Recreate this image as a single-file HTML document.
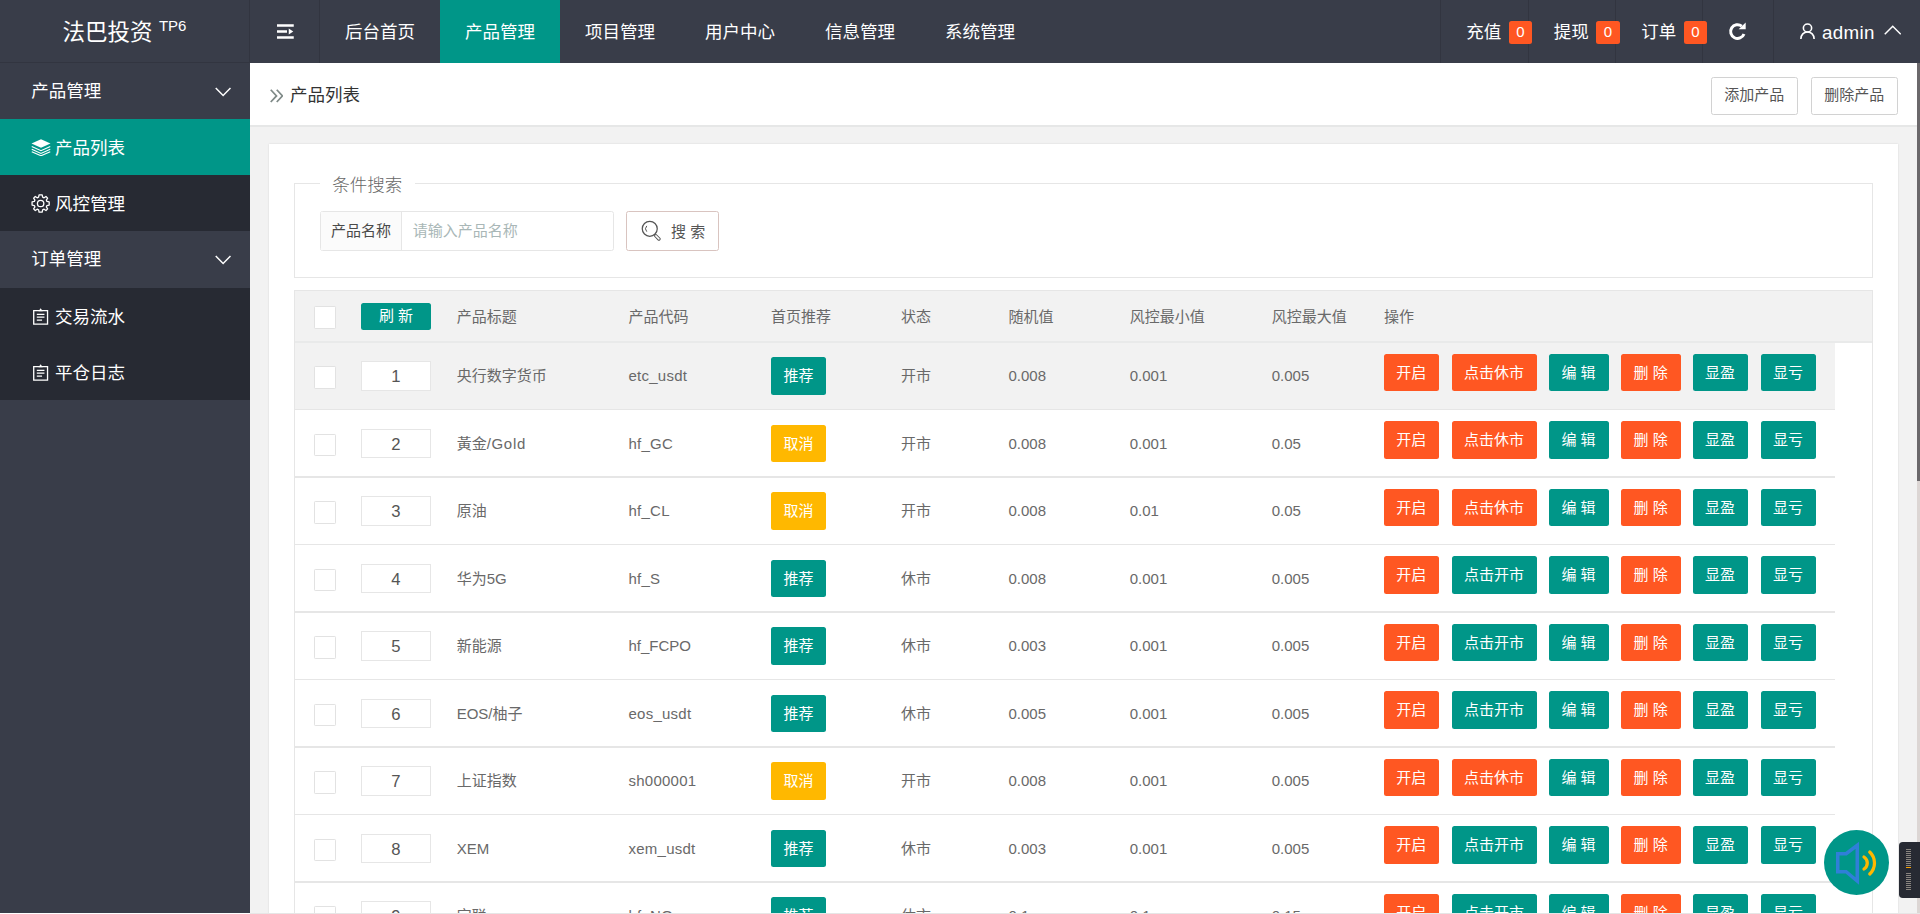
<!DOCTYPE html>
<html lang="zh-CN">
<head>
<meta charset="utf-8">
<title>产品列表</title>
<style>
*{box-sizing:border-box;margin:0;padding:0}
html,body{width:1920px;height:914px;overflow:hidden;background:#fff}
body:after{content:"";position:absolute;left:250px;top:913px;width:1670px;height:1px;background:#e6e6e6}
body{font-family:"Liberation Sans","Noto Sans CJK SC",sans-serif;font-size:14px;color:#333;line-height:24px}
#app{position:absolute;left:0;top:0;width:1536px;height:730.4px;zoom:1.25;overflow:hidden;background:#f2f2f2}
ul{list-style:none}
svg{display:block}
/* header */
.hd{position:absolute;left:0;top:0;width:1536px;height:50px;background:#393D49;color:#fff}
.logo{position:absolute;left:0;top:0;width:200px;height:50px;line-height:52px;text-align:center;font-size:18px;color:#fff;border-right:1px solid rgba(0,0,0,.12);border-bottom:1px solid rgba(0,0,0,.12)}
.logo sup{font-size:12px;position:relative;top:-7px;vertical-align:baseline;margin-left:5px}
.fold{position:absolute;left:200px;top:0;width:56px;height:50px;border-right:1px solid rgba(0,0,0,.12)}
.fold svg{position:absolute;left:21.6px;top:18px}
.nav{position:absolute;left:256px;top:0;height:50px}
.nav li{float:left;width:96px;height:50px;line-height:52px;text-align:center;color:#fff;font-size:14px}
.nav li.on{background:#009688}
.navr{position:absolute;left:0;top:0;width:1536px;height:50px}
.navr .it{position:absolute;top:0;height:50px;line-height:52px;font-size:14px;color:#fff;white-space:nowrap}
.navr .sep{position:absolute;top:0;width:1px;height:50px;background:rgba(0,0,0,.12)}
.badge{position:absolute;top:17px;height:18px;line-height:18px;padding:0 6px;font-size:12px;background:#FF5722;color:#fff;border-radius:2px;text-align:center}
/* side */
.side{position:absolute;left:0;top:50px;width:200px;bottom:0;background:#393D49;color:#fff}
.side .grp{position:relative;height:45px;line-height:45px;padding-left:25px;font-size:14px;color:#fff}
.side .grp svg{position:absolute;right:15px;top:19.2px}
.side .sub{background:rgba(0,0,0,.3)}
.side .sub li{position:relative;height:45px;line-height:47px;padding-left:44px;font-size:14px;color:#fff}
.side .sub li.on{background:#009688}
.side .sub li svg{position:absolute;left:24.4px;top:15.8px}
/* body */
.bd{position:absolute;left:200px;top:50px;width:1333.6px;bottom:0;background:#f2f2f2;overflow:hidden}
.crumb{position:relative;height:50px;background:#fff;box-shadow:0 1.6px 0 0 #e6e7e7;line-height:50px;font-size:14px;color:#333}
.crumb .tt{position:absolute;left:32px;top:1px}
.crumb svg{position:absolute;left:15.6px;top:21px}
.btnp{position:absolute;top:11.6px;height:30px;line-height:27px;border:1px solid #d2d2d2;border-radius:2px;background:#fff;color:#555;font-size:12px;text-align:center}
.panel{position:absolute;left:15px;top:65px;width:1303.6px;height:700px;background:#fff;padding:20px;box-shadow:0 0 1.5px 0 rgba(0,0,0,.12)}
fieldset{position:relative;border:1px solid #e6e6e6;height:85.6px;margin-top:1.6px}
fieldset legend{margin-left:20px;padding:0 10px;font-size:14px;font-weight:300;color:#666;line-height:20px;position:relative;top:1.6px}
.ig{position:absolute;left:41px;top:53.8px;height:32px;width:235px;border:1px solid #e6e6e6;border-radius:2px;background:#fff}
.ig .lb{position:absolute;left:0;top:0;width:65px;height:30px;line-height:30px;text-align:center;font-size:12px;color:#4a4a4a;background:#fbfbfb;border-right:1px solid #e6e6e6}
.ig .ph{position:absolute;left:73.4px;top:0;line-height:30px;font-size:12px;color:#a9b7b7}
.sbtn{position:absolute;left:286px;top:53.8px;width:74px;height:32px;border:1px solid #d9c4c0;border-radius:2px;background:#fff;font-size:12px;color:#555;line-height:30px}
.sbtn svg{position:absolute;left:11px;top:6.2px}
.sbtn span{position:absolute;left:35px;top:.8px}
/* table */
.tb{position:absolute;left:20px;top:117px;width:1263.6px;height:600px;border:1px solid #e6e6e6;border-bottom:0}
.th{position:absolute;left:0;top:0;width:100%;height:41.8px;background:#f2f2f2;border-bottom:1.6px solid #e9eaea}
.th span,.tr span.c{position:absolute;font-size:12px;color:#696969;white-space:nowrap}
.tr span.ls{letter-spacing:.2px}
.th span{top:0;line-height:41px}
.tr{position:absolute;left:0;width:1232px;height:54px;border-bottom:1px solid #e6e6e6}
.tr.hv{background:#f2f2f2;top:41.6px!important;height:53.4px}
.tr.hv>*{margin-top:-.6px}
.tr.b2{height:54.8px;border-bottom-width:1.6px}
.tr span.c{top:0;line-height:54px}
.ck{position:absolute;left:15px;width:18px;height:18px;border:1px solid #e2e2e2;border-radius:1px;background:#fff}
.num{position:absolute;left:53px;top:15px;width:56px;height:23.6px;border:1px solid #e6e6e6;background:#fff;text-align:center;font-size:13.33px;line-height:23.5px;color:#555}
.b{position:absolute;height:30px;line-height:30px;border-radius:2px;color:#fff;font-size:12px;text-align:center;white-space:nowrap}
.g{background:#009688}.o{background:#FF5722}.y{background:#FFB800}
.rf{position:absolute;left:53px;top:9.2px;width:56px;height:22px;line-height:21px;border-radius:2px;background:#009688;color:#fff;font-size:12px;text-align:center}
.sbar{position:absolute;left:1533.6px;top:50px;width:2.4px;bottom:0;background:#dcd6d4}
.sthumb{position:absolute;left:1533.6px;top:50px;width:2.4px;height:335px;background:#6b686b}
.spk{position:absolute;left:1459.2px;top:664px;width:52px;height:52px}
.wdg{position:absolute;left:1519.2px;top:673.6px;width:16.8px;height:44.8px;background:#272a33;border-radius:3px 0 0 3px}
</style>
</head>
<body>
<div id="app">
<div class="hd">
<div class="logo">法巴投资<sup>TP6</sup></div>
<div class="fold"><svg width="14" height="14" viewBox="0 0 14 14"><rect x="0" y="1" width="13.4" height="2" fill="#fff"/><rect x="0" y="5.8" width="8" height="2" fill="#fff"/><rect x="0" y="10.6" width="13.4" height="2" fill="#fff"/><path d="M9.4 4.4 L13 6.8 L9.4 9.2 Z" fill="#fff"/></svg></div>
<ul class="nav"><li>后台首页</li><li class="on">产品管理</li><li>项目管理</li><li>用户中心</li><li>信息管理</li><li>系统管理</li></ul>
<div class="navr">
<i class="sep" style="left:1152px"></i><i class="sep" style="left:1222px"></i><i class="sep" style="left:1292px"></i><i class="sep" style="left:1361.6px"></i><i class="sep" style="left:1418px"></i>
<span class="it" style="left:1173px">充值</span><span class="badge" style="left:1207px">0</span>
<span class="it" style="left:1243px">提现</span><span class="badge" style="left:1277px">0</span>
<span class="it" style="left:1313px">订单</span><span class="badge" style="left:1347px">0</span>
<svg style="position:absolute;left:1382.6px;top:17.4px" width="15.6" height="15.6" viewBox="0 0 15 15"><path d="M12.3 9.2 A5.3 5.3 0 1 1 10.6 3.2" fill="none" stroke="#fff" stroke-width="2.3"/><path d="M8.2 5.6 L13.6 5.6 L13.6 0.4 Z" fill="#fff"/></svg>
<svg style="position:absolute;left:1440px;top:18px" width="12" height="13.4" preserveAspectRatio="none" viewBox="0 0 12 14"><circle cx="6" cy="4.2" r="3.3" fill="none" stroke="#fff" stroke-width="1.3"/><path d="M0.7 13.6 C0.7 9.6 3 7.6 6 7.6 C9 7.6 11.3 9.6 11.3 13.6" fill="none" stroke="#fff" stroke-width="1.3"/></svg>
<span class="it" style="left:1457.6px;font-size:15px;letter-spacing:.25px">admin</span>
<svg style="position:absolute;left:1507px;top:20px" width="14" height="8" viewBox="0 0 14 8"><path d="M0.6 7.4 L7 1 L13.4 7.4" fill="none" stroke="#fff" stroke-width="1.2"/></svg>
</div>
</div>
<div class="side">
<div class="grp">产品管理<svg width="13" height="8" viewBox="0 0 13 8"><path d="M0.6 0.8 L6.5 6.8 L12.4 0.8" fill="none" stroke="#fff" stroke-width="1.2"/></svg></div>
<ul class="sub"><li class="on"><svg width="16" height="13.8" preserveAspectRatio="none" viewBox="0 0 16 15"><path d="M8 0.3 L15.6 4 L8 7.7 L0.4 4 Z" fill="#fff"/><path d="M0.6 6.6 L8 10.2 L15.4 6.6 M0.6 8.9 L8 12.5 L15.4 8.9 M0.6 11.1 L8 14.6 L15.4 11.1" fill="none" stroke="#fff" stroke-width="0.9"/></svg>产品列表</li><li><svg style="left:24.4px;top:15px" width="15.4" height="15.2" viewBox="0 0 16 16"><circle cx="8" cy="8" r="2.7" fill="none" stroke="#fff" stroke-width="1.1"/><path d="M6.7 0.8 L9.3 0.8 L9.7 2.7 L10.9 3.2 L12.5 2.1 L13.9 3.5 L12.8 5.1 L13.3 6.3 L15.2 6.7 L15.2 9.3 L13.3 9.7 L12.8 10.9 L13.9 12.5 L12.5 13.9 L10.9 12.8 L9.7 13.3 L9.3 15.2 L6.7 15.2 L6.3 13.3 L5.1 12.8 L3.5 13.9 L2.1 12.5 L3.2 10.9 L2.7 9.7 L0.8 9.3 L0.8 6.7 L2.7 6.3 L3.2 5.1 L2.1 3.5 L3.5 2.1 L5.1 3.2 L6.3 2.7 Z" fill="none" stroke="#fff" stroke-width="1.1" stroke-linejoin="round"/></svg>风控管理</li></ul>
<div class="grp">订单管理<svg width="13" height="8" viewBox="0 0 13 8"><path d="M0.6 0.8 L6.5 6.8 L12.4 0.8" fill="none" stroke="#fff" stroke-width="1.2"/></svg></div>
<ul class="sub"><li><svg style="left:26.4px;top:16px" width="12.4" height="13.6" viewBox="0 0 13 14" preserveAspectRatio="none"><path d="M0.6 2.2 L0.6 13.3 L12.2 13.3 L12.2 2.2 Z" fill="none" stroke="#fff" stroke-width="1.1"/><path d="M4.6 2.6 L6.4 0.2 L8.2 2.6 Z" fill="#fff"/><path d="M3.2 5.2 H9.6 M3.2 7.6 H9.6 M3.2 10 H7.6" stroke="#fff" stroke-width="1" fill="none"/></svg>交易流水</li><li><svg style="left:26.4px;top:16px" width="12.4" height="13.6" viewBox="0 0 13 14" preserveAspectRatio="none"><path d="M0.6 2.2 L0.6 13.3 L12.2 13.3 L12.2 2.2 Z" fill="none" stroke="#fff" stroke-width="1.1"/><path d="M4.6 2.6 L6.4 0.2 L8.2 2.6 Z" fill="#fff"/><path d="M3.2 5.2 H9.6 M3.2 7.6 H9.6 M3.2 10 H7.6" stroke="#fff" stroke-width="1" fill="none"/></svg>平仓日志</li></ul>
</div>
<div class="bd">
<div class="crumb"><svg width="11" height="11" viewBox="0 0 11 11"><path d="M0.6 0.6 L5.2 5.5 L0.6 10.4 M5.4 0.6 L10 5.5 L5.4 10.4" fill="none" stroke="#7f8a88" stroke-width="1.4"/></svg><span class="tt">产品列表</span>
<a class="btnp" style="left:1169px;width:69px">添加产品</a><a class="btnp" style="left:1249px;width:69px">删除产品</a></div>
<div class="panel">
<fieldset><legend>条件搜索</legend></fieldset>
<div class="ig"><span class="lb">产品名称</span><span class="ph">请输入产品名称</span></div>
<a class="sbtn"><svg width="17" height="17" viewBox="0 0 17 17"><circle cx="7" cy="7" r="6" fill="none" stroke="#555" stroke-width="1"/><path d="M4.6 9.3 A3.4 3.4 0 0 1 4.6 4.7" fill="none" stroke="#555" stroke-width="0.8"/><rect x="11.2" y="11" width="5.4" height="2" rx="1" transform="rotate(45 11.2 12)" fill="#fff" stroke="#555" stroke-width="0.8"/></svg><span>搜 索</span></a>
<div class="tb">
<div class="th"><i class="ck" style="top:12px"></i><a class="rf">刷 新</a><span style="left:129.5px">产品标题</span><span style="left:267px">产品代码</span><span style="left:381px">首页推荐</span><span style="left:485px">状态</span><span style="left:571px">随机值</span><span style="left:668px">风控最小值</span><span style="left:781.6px">风控最大值</span><span style="left:871.3px">操作</span></div>
<div class="tr hv" style="top:41px"><i class="ck" style="top:19px"></i><span class="num">1</span><span class="c" style="left:129.5px">央行数字货币</span><span class="c ls" style="left:267px">etc_usdt</span><a class="b g" style="left:381px;top:12px;width:44px">推荐</a><span class="c" style="left:485px">开市</span><span class="c" style="left:571px">0.008</span><span class="c" style="left:668px">0.001</span><span class="c" style="left:781.6px">0.005</span><a class="b o" style="left:871.3px;top:9px;width:44px">开启</a><a class="b o" style="left:925.4px;top:9px;width:68px">点击休市</a><a class="b g" style="left:1003px;top:9px;width:48px">编 辑</a><a class="b o" style="left:1060.7px;top:9px;width:48px">删 除</a><a class="b g" style="left:1118.3px;top:9px;width:44px">显盈</a><a class="b g" style="left:1172.7px;top:9px;width:44px">显亏</a></div>
<div class="tr b2" style="top:95px"><i class="ck" style="top:19px"></i><span class="num">2</span><span class="c" style="left:129.5px">黃金<b style="font-weight:400;letter-spacing:.55px">/Gold</b></span><span class="c ls" style="left:267px">hf_GC</span><a class="b y" style="left:381px;top:12px;width:44px">取消</a><span class="c" style="left:485px">开市</span><span class="c" style="left:571px">0.008</span><span class="c" style="left:668px">0.001</span><span class="c" style="left:781.6px">0.05</span><a class="b o" style="left:871.3px;top:9px;width:44px">开启</a><a class="b o" style="left:925.4px;top:9px;width:68px">点击休市</a><a class="b g" style="left:1003px;top:9px;width:48px">编 辑</a><a class="b o" style="left:1060.7px;top:9px;width:48px">删 除</a><a class="b g" style="left:1118.3px;top:9px;width:44px">显盈</a><a class="b g" style="left:1172.7px;top:9px;width:44px">显亏</a></div>
<div class="tr" style="top:149px"><i class="ck" style="top:19px"></i><span class="num">3</span><span class="c" style="left:129.5px">原油</span><span class="c ls" style="left:267px">hf_CL</span><a class="b y" style="left:381px;top:12px;width:44px">取消</a><span class="c" style="left:485px">开市</span><span class="c" style="left:571px">0.008</span><span class="c" style="left:668px">0.01</span><span class="c" style="left:781.6px">0.05</span><a class="b o" style="left:871.3px;top:9px;width:44px">开启</a><a class="b o" style="left:925.4px;top:9px;width:68px">点击休市</a><a class="b g" style="left:1003px;top:9px;width:48px">编 辑</a><a class="b o" style="left:1060.7px;top:9px;width:48px">删 除</a><a class="b g" style="left:1118.3px;top:9px;width:44px">显盈</a><a class="b g" style="left:1172.7px;top:9px;width:44px">显亏</a></div>
<div class="tr b2" style="top:203px"><i class="ck" style="top:19px"></i><span class="num">4</span><span class="c" style="left:129.5px">华为5G</span><span class="c ls" style="left:267px">hf_S</span><a class="b g" style="left:381px;top:12px;width:44px">推荐</a><span class="c" style="left:485px">休市</span><span class="c" style="left:571px">0.008</span><span class="c" style="left:668px">0.001</span><span class="c" style="left:781.6px">0.005</span><a class="b o" style="left:871.3px;top:9px;width:44px">开启</a><a class="b g" style="left:925.4px;top:9px;width:68px">点击开市</a><a class="b g" style="left:1003px;top:9px;width:48px">编 辑</a><a class="b o" style="left:1060.7px;top:9px;width:48px">删 除</a><a class="b g" style="left:1118.3px;top:9px;width:44px">显盈</a><a class="b g" style="left:1172.7px;top:9px;width:44px">显亏</a></div>
<div class="tr" style="top:257px"><i class="ck" style="top:19px"></i><span class="num">5</span><span class="c" style="left:129.5px">新能源</span><span class="c" style="left:267px">hf_FCPO</span><a class="b g" style="left:381px;top:12px;width:44px">推荐</a><span class="c" style="left:485px">休市</span><span class="c" style="left:571px">0.003</span><span class="c" style="left:668px">0.001</span><span class="c" style="left:781.6px">0.005</span><a class="b o" style="left:871.3px;top:9px;width:44px">开启</a><a class="b g" style="left:925.4px;top:9px;width:68px">点击开市</a><a class="b g" style="left:1003px;top:9px;width:48px">编 辑</a><a class="b o" style="left:1060.7px;top:9px;width:48px">删 除</a><a class="b g" style="left:1118.3px;top:9px;width:44px">显盈</a><a class="b g" style="left:1172.7px;top:9px;width:44px">显亏</a></div>
<div class="tr b2" style="top:311px"><i class="ck" style="top:19px"></i><span class="num">6</span><span class="c" style="left:129.5px">EOS/柚子</span><span class="c ls" style="left:267px">eos_usdt</span><a class="b g" style="left:381px;top:12px;width:44px">推荐</a><span class="c" style="left:485px">休市</span><span class="c" style="left:571px">0.005</span><span class="c" style="left:668px">0.001</span><span class="c" style="left:781.6px">0.005</span><a class="b o" style="left:871.3px;top:9px;width:44px">开启</a><a class="b g" style="left:925.4px;top:9px;width:68px">点击开市</a><a class="b g" style="left:1003px;top:9px;width:48px">编 辑</a><a class="b o" style="left:1060.7px;top:9px;width:48px">删 除</a><a class="b g" style="left:1118.3px;top:9px;width:44px">显盈</a><a class="b g" style="left:1172.7px;top:9px;width:44px">显亏</a></div>
<div class="tr" style="top:365px"><i class="ck" style="top:19px"></i><span class="num">7</span><span class="c" style="left:129.5px">上证指数</span><span class="c ls" style="left:267px">sh000001</span><a class="b y" style="left:381px;top:12px;width:44px">取消</a><span class="c" style="left:485px">开市</span><span class="c" style="left:571px">0.008</span><span class="c" style="left:668px">0.001</span><span class="c" style="left:781.6px">0.005</span><a class="b o" style="left:871.3px;top:9px;width:44px">开启</a><a class="b o" style="left:925.4px;top:9px;width:68px">点击休市</a><a class="b g" style="left:1003px;top:9px;width:48px">编 辑</a><a class="b o" style="left:1060.7px;top:9px;width:48px">删 除</a><a class="b g" style="left:1118.3px;top:9px;width:44px">显盈</a><a class="b g" style="left:1172.7px;top:9px;width:44px">显亏</a></div>
<div class="tr b2" style="top:419px"><i class="ck" style="top:19px"></i><span class="num">8</span><span class="c" style="left:129.5px">XEM</span><span class="c ls" style="left:267px">xem_usdt</span><a class="b g" style="left:381px;top:12px;width:44px">推荐</a><span class="c" style="left:485px">休市</span><span class="c" style="left:571px">0.003</span><span class="c" style="left:668px">0.001</span><span class="c" style="left:781.6px">0.005</span><a class="b o" style="left:871.3px;top:9px;width:44px">开启</a><a class="b g" style="left:925.4px;top:9px;width:68px">点击开市</a><a class="b g" style="left:1003px;top:9px;width:48px">编 辑</a><a class="b o" style="left:1060.7px;top:9px;width:48px">删 除</a><a class="b g" style="left:1118.3px;top:9px;width:44px">显盈</a><a class="b g" style="left:1172.7px;top:9px;width:44px">显亏</a></div>
<div class="tr" style="top:473px"><i class="ck" style="top:19px"></i><span class="num">9</span><span class="c" style="left:129.5px">宝联</span><span class="c ls" style="left:267px">hf_NQ</span><a class="b g" style="left:381px;top:12px;width:44px">推荐</a><span class="c" style="left:485px">休市</span><span class="c" style="left:571px">0.1</span><span class="c" style="left:668px">0.1</span><span class="c" style="left:781.6px">0.15</span><a class="b o" style="left:871.3px;top:9px;width:44px">开启</a><a class="b g" style="left:925.4px;top:9px;width:68px">点击开市</a><a class="b g" style="left:1003px;top:9px;width:48px">编 辑</a><a class="b o" style="left:1060.7px;top:9px;width:48px">删 除</a><a class="b g" style="left:1118.3px;top:9px;width:44px">显盈</a><a class="b g" style="left:1172.7px;top:9px;width:44px">显亏</a></div>
</div>
</div>
</div>
<div class="sbar"></div><div class="sthumb"></div>
<div class="spk"><svg width="52" height="52" viewBox="0 0 52 52"><circle cx="26" cy="26" r="26" fill="#009688"/><path d="M11 19 L17.7 19 L26.6 12.2 L26.6 40.8 L17.7 33.4 L11 33.4 Z" fill="none" stroke="#2f7fd8" stroke-width="2.8" stroke-linejoin="miter"/><path d="M32 21.6 A5.7 5.7 0 0 1 32 31.2" fill="none" stroke="#FFB800" stroke-width="2.6" stroke-linecap="round"/><path d="M36.6 17.6 A12.1 12.1 0 0 1 36.6 35.2" fill="none" stroke="#FFB800" stroke-width="2.6" stroke-linecap="round"/></svg></div>
<div class="wdg"><svg width="16.8" height="44.8" viewBox="0 0 21 56" shape-rendering="crispEdges"><g fill="#8a8580"><rect x="7" y="7" width="5" height="1"/><rect x="7" y="9" width="5" height="1"/><rect x="7" y="11" width="5" height="1"/><rect x="7" y="13" width="5" height="1"/><rect x="7" y="15" width="5" height="1"/><rect x="7" y="17" width="5" height="1"/><rect x="7" y="19" width="5" height="1"/><rect x="7" y="21" width="5" height="1"/><rect x="7" y="23" width="5" height="1"/><rect x="7" y="31" width="5" height="1"/><rect x="7" y="33" width="5" height="1"/><rect x="7" y="35" width="5" height="1"/><rect x="7" y="37" width="5" height="1"/><rect x="7" y="39" width="5" height="1"/><rect x="7" y="41" width="5" height="1"/><rect x="7" y="43" width="5" height="1"/><rect x="7" y="45" width="5" height="1"/><rect x="7" y="47" width="5" height="1"/></g><rect x="7" y="25" width="5" height="1" fill="#f7a000"/></svg></div>
</div>
</body>
</html>
